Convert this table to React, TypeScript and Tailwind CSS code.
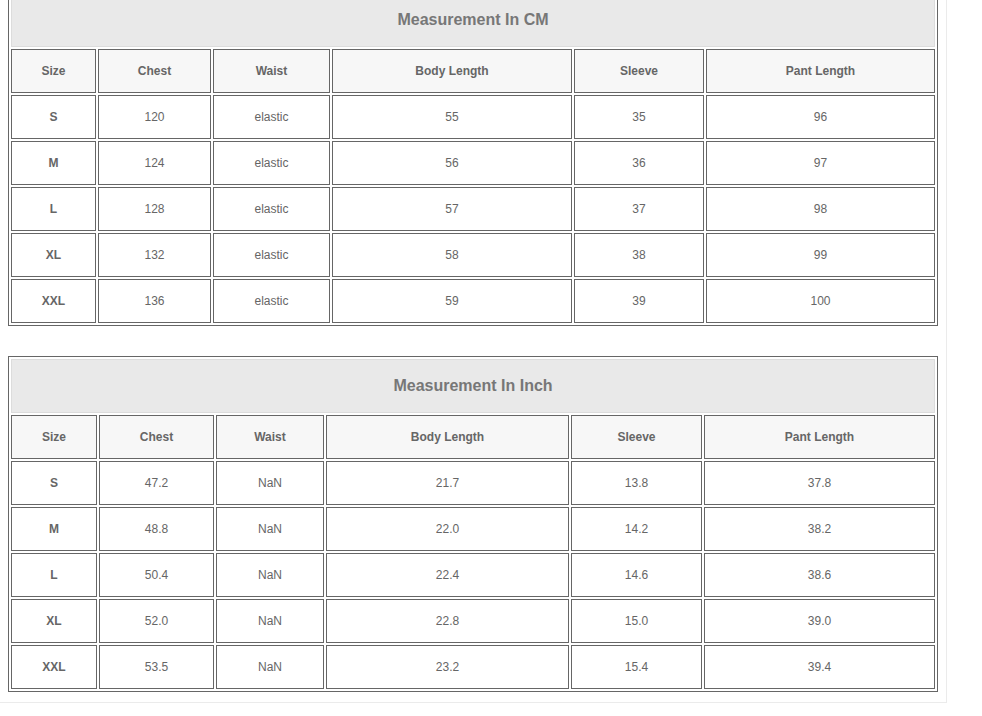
import React from "react";

type TableProps = {
  title: string;
  cols: string;
  rows: string[][];
};

const headers = ["Size", "Chest", "Waist", "Body Length", "Sleeve", "Pant Length"];

function SizeTable({ title, cols, rows }: TableProps) {
  return (
    <div className={`w-[930px] border border-[#666] bg-white p-[2px] grid gap-[2px] ${cols}`}>
      <div className="col-span-6 h-[54px] bg-[#e9e9e9] border border-[#dcdcdc] flex items-center justify-center text-[16px] font-bold text-[#777]">
        {title}
      </div>
      {headers.map((h) => (
        <div
          key={h}
          className="h-[44px] border border-[#666] bg-[#f7f7f7] flex items-center justify-center text-[12px] font-bold text-[#666]"
        >
          {h}
        </div>
      ))}
      {rows.map((r) =>
        r.map((v, i) => (
          <div
            key={r[0] + i}
            className={`h-[44px] border border-[#666] bg-white flex items-center justify-center text-[12px] text-[#666] ${
              i === 0 ? "font-bold" : "font-normal"
            }`}
          >
            {v}
          </div>
        ))
      )}
    </div>
  );
}

export default function App() {
  const cm = [
    ["S", "120", "elastic", "55", "35", "96"],
    ["M", "124", "elastic", "56", "36", "97"],
    ["L", "128", "elastic", "57", "37", "98"],
    ["XL", "132", "elastic", "58", "38", "99"],
    ["XXL", "136", "elastic", "59", "39", "100"],
  ];
  const inch = [
    ["S", "47.2", "NaN", "21.7", "13.8", "37.8"],
    ["M", "48.8", "NaN", "22.0", "14.2", "38.2"],
    ["L", "50.4", "NaN", "22.4", "14.6", "38.6"],
    ["XL", "52.0", "NaN", "22.8", "15.0", "39.0"],
    ["XXL", "53.5", "NaN", "23.2", "15.4", "39.4"],
  ];
  return (
    <div className="w-[982px] h-[716px] overflow-hidden bg-white" style={{ fontFamily: '"Liberation Sans", Arial, sans-serif' }}>
      <div className="mt-[-10px] w-[947px] border-r border-b border-[#ebebeb] pl-[8px] pb-[10px] flex flex-col gap-[30px]">
        <SizeTable
          title="Measurement In CM"
          cols="grid-cols-[85px_113px_117px_240px_130px_229px]"
          rows={cm}
        />
        <SizeTable
          title="Measurement In Inch"
          cols="grid-cols-[86px_115px_108px_243px_131px_231px]"
          rows={inch}
        />
      </div>
    </div>
  );
}
